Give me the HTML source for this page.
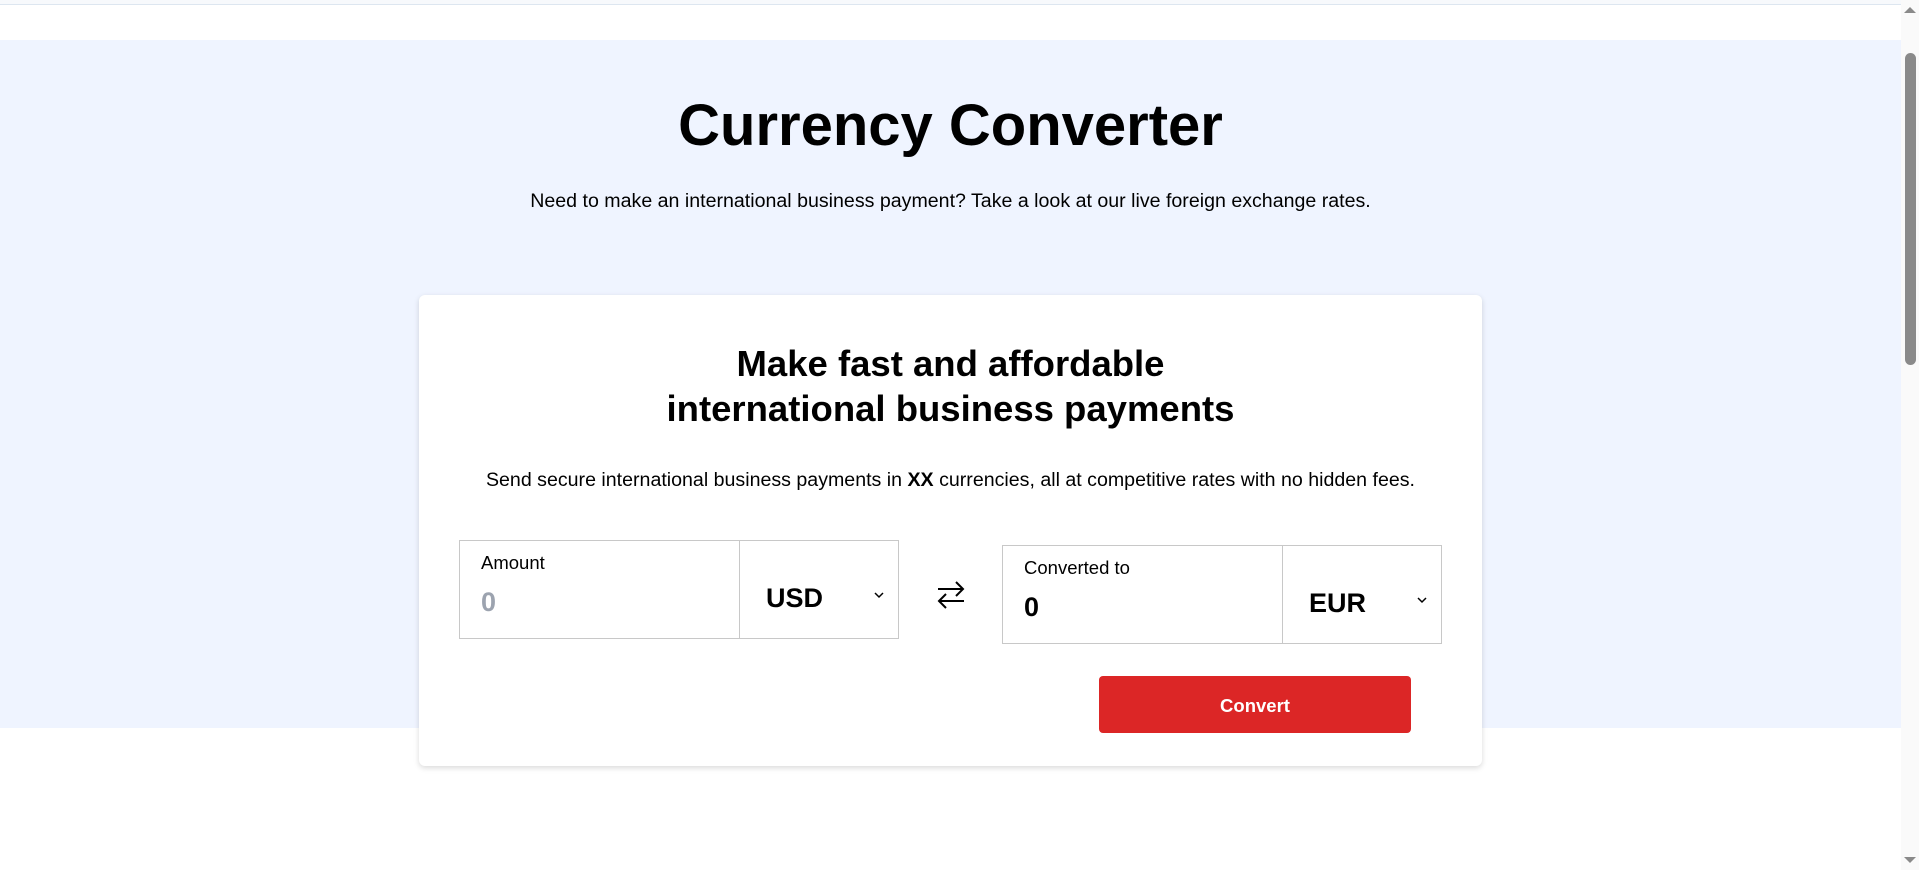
<!DOCTYPE html>
<html><head><meta charset="utf-8"><style>
*{box-sizing:border-box;margin:0;padding:0}
body{width:1919px;height:870px;overflow:hidden;background:#fff;font-family:"Liberation Sans",sans-serif;color:#000;position:relative}
.topline{position:absolute;left:0;top:0;width:1901px;height:5px;border-bottom:1px solid #dde6f0;background:#f7f9fc}
.hero{position:absolute;left:0;top:40px;width:1901px;height:688px;background:#eff4ff}
h1{position:absolute;left:0;width:1901px;top:90px;text-align:center;font-size:58px;font-weight:bold;line-height:72px}
.sub{position:absolute;left:0;width:1901px;top:189px;text-align:center;font-size:19.6px;line-height:24px}
.card{position:absolute;left:419px;top:295px;width:1063px;height:471px;background:#fff;border-radius:6px;box-shadow:0 2px 6px rgba(0,0,0,.15)}
h2{position:absolute;left:0;width:1063px;top:46px;text-align:center;font-size:36.5px;font-weight:bold;line-height:45px}
.p{position:absolute;left:0;width:1063px;top:173px;text-align:center;font-size:19.6px;line-height:24px}
.box{position:absolute;border:1px solid #c8c8c8;background:#fff}
.lbl{position:absolute;left:21px;top:11px;font-size:18.5px}
.val{position:absolute;left:21px;top:46px;font-size:27px;font-weight:bold}
.cur{position:absolute;left:26px;top:42px;font-size:27px;font-weight:bold}
.chev{position:absolute;right:14px;top:50px}
.btn{position:absolute;left:680px;top:381px;width:312px;height:57px;background:#dc2626;border-radius:4px;color:#fff;font-weight:bold;font-size:18.5px;text-align:center;line-height:59px}
.sb{position:absolute;right:0;top:0;width:18px;height:870px;background:#fafafa}
.thumb{position:absolute;left:4px;top:53px;width:11px;height:312px;background:#8a8a8a;border-radius:6px}
</style></head><body>
<div class="topline"></div>
<div class="hero"></div>
<h1>Currency Converter</h1>
<div class="sub">Need to make an international business payment? Take a look at our live foreign exchange rates.</div>
<div class="card">
<h2>Make fast and affordable<br>international business payments</h2>
<div class="p">Send secure international business payments in <b>XX</b> currencies, all at competitive rates with no hidden fees.</div>
<div class="box" style="left:40px;top:245px;width:281px;height:99px"><div class="lbl">Amount</div><div class="val" style="color:#9ca3af">0</div></div>
<div class="box" style="left:320px;top:245px;width:160px;height:99px"><div class="cur">USD</div><svg class="chev" width="10" height="8" viewBox="0 0 10 8"><path d="M1 2l4 4 4-4" fill="none" stroke="#000" stroke-width="1.5"/></svg></div>
<svg style="position:absolute;left:516px;top:284px" width="32" height="32" viewBox="0 0 32 32"><path d="M3 10h25M21 3l7 7-7 7M29 22H4M11 15l-7 7 7 7" fill="none" stroke="#000" stroke-width="2"/></svg>
<div class="box" style="left:583px;top:250px;width:281px;height:99px"><div class="lbl">Converted to</div><div class="val">0</div></div>
<div class="box" style="left:863px;top:250px;width:160px;height:99px"><div class="cur">EUR</div><svg class="chev" width="10" height="8" viewBox="0 0 10 8"><path d="M1 2l4 4 4-4" fill="none" stroke="#000" stroke-width="1.5"/></svg></div>
<div class="btn">Convert</div>
</div>
<div class="sb"><svg style="position:absolute;left:3px;top:6px" width="12" height="8"><path d="M0 7L6 1l6 6z" fill="#8a8a8a"/></svg><div class="thumb"></div><svg style="position:absolute;left:3px;top:856px" width="12" height="8"><path d="M0 1l6 6 6-6z" fill="#8a8a8a"/></svg></div>
</body></html>
